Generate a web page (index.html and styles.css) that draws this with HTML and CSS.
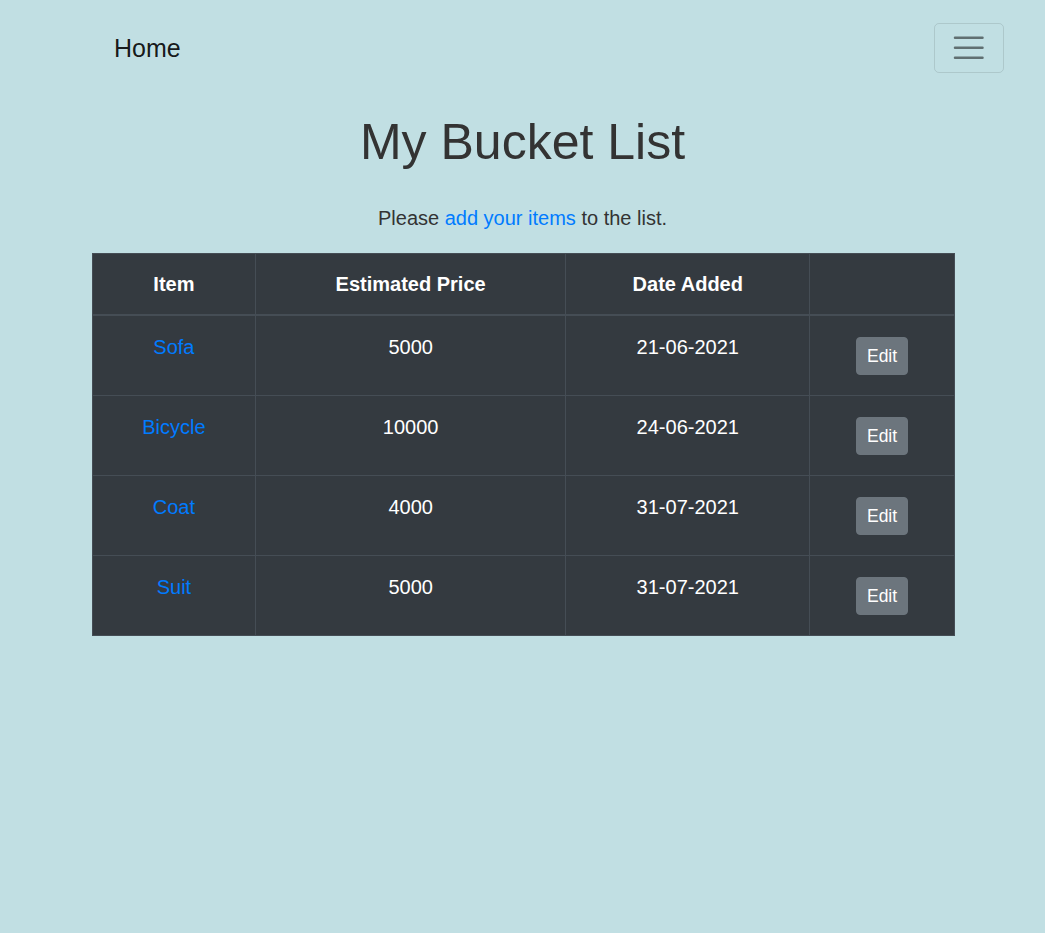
FILE: index.html
```html
<!DOCTYPE html>
<html lang="en">
<head>
<meta charset="utf-8">
<title>My Bucket List</title>
<link rel="stylesheet" href="styles.css">
</head>
<body>
<nav class="navbar">
  <a class="brand" href="#">Home</a>
  <button class="toggler" type="button" aria-label="Toggle navigation">
    <svg class="toggler-icon" viewBox="0 0 30 30" width="37.5" height="37.5"><path stroke="rgba(0,0,0,0.5)" stroke-linecap="round" stroke-miterlimit="10" stroke-width="2" d="M4 7h22M4 15h22M4 23h22"/></svg>
  </button>
</nav>
<main class="main">
  <h1 class="title">My Bucket List</h1>
  <p class="lead">Please <a href="#">add your items</a> to the list.</p>
  <table class="bucket">
    <colgroup>
      <col class="c-item"><col class="c-price"><col class="c-date"><col class="c-act">
    </colgroup>
    <thead>
      <tr><th>Item</th><th>Estimated Price</th><th>Date Added</th><th></th></tr>
    </thead>
    <tbody>
      <tr><td><a href="#">Sofa</a></td><td>5000</td><td>21-06-2021</td><td><button class="btn">Edit</button></td></tr>
      <tr><td><a href="#">Bicycle</a></td><td>10000</td><td>24-06-2021</td><td><button class="btn">Edit</button></td></tr>
      <tr><td><a href="#">Coat</a></td><td>4000</td><td>31-07-2021</td><td><button class="btn">Edit</button></td></tr>
      <tr><td><a href="#">Suit</a></td><td>5000</td><td>31-07-2021</td><td><button class="btn">Edit</button></td></tr>
    </tbody>
  </table>
</main>
</body>
</html>
```

FILE: styles.css
```css
html, body {
  margin: 0;
  padding: 0;
}
body {
  background: #c1dfe3;
  font-family: "Liberation Sans", Arial, sans-serif;
  font-size: 20px;
  line-height: 1.5;
  color: #333;
  min-height: 933px;
}
a {
  color: #007bff;
  text-decoration: none;
}
.navbar {
  display: flex;
  justify-content: space-between;
  align-items: center;
  padding: 23px 41px 0 114px;
}
.brand {
  font-size: 25px;
  line-height: 1.2;
  color: rgba(0,0,0,0.9);
}
.toggler {
  width: 70px;
  height: 50px;
  padding: 5px 15px;
  border: 1px solid rgba(0,0,0,0.1);
  border-radius: 5px;
  background: transparent;
  display: flex;
  align-items: center;
  justify-content: center;
}
.toggler-icon {
  display: block;
}
.main {
  display: flex;
  flex-direction: column;
  align-items: center;
}
.title {
  margin: 39px 0 0;
  font-size: 50px;
  font-weight: 500;
  line-height: 60px;
  color: #333;
}
.lead {
  margin: 31px 0 20px;
  line-height: 30px;
}
.bucket {
  width: 863px;
  margin-left: 2px;
  border-collapse: collapse;
  background: #343a40;
  color: #fff;
  border: 1px solid #454d55;
}
.c-item { width: 163px; }
.c-price { width: 311px; }
.c-date { width: 244px; }
.c-act { width: 145px; }
.bucket th,
.bucket td {
  padding: 15px;
  border: 1px solid #454d55;
  text-align: center;
  vertical-align: top;
  line-height: 30px;
}
.bucket td {
  padding-top: 16px;
  padding-bottom: 14px;
}
.bucket th {
  font-weight: 700;
  border-bottom-width: 2px;
}
.btn {
  margin: 5px 0 6px;
  height: 38px;
  padding: 0 10px;
  font-family: "Liberation Sans", Arial, sans-serif;
  font-size: 17.5px;
  line-height: 36px;
  color: #fff;
  background: #6c757d;
  border: 1px solid #6c757d;
  border-radius: 4px;
  vertical-align: top;
}
```
